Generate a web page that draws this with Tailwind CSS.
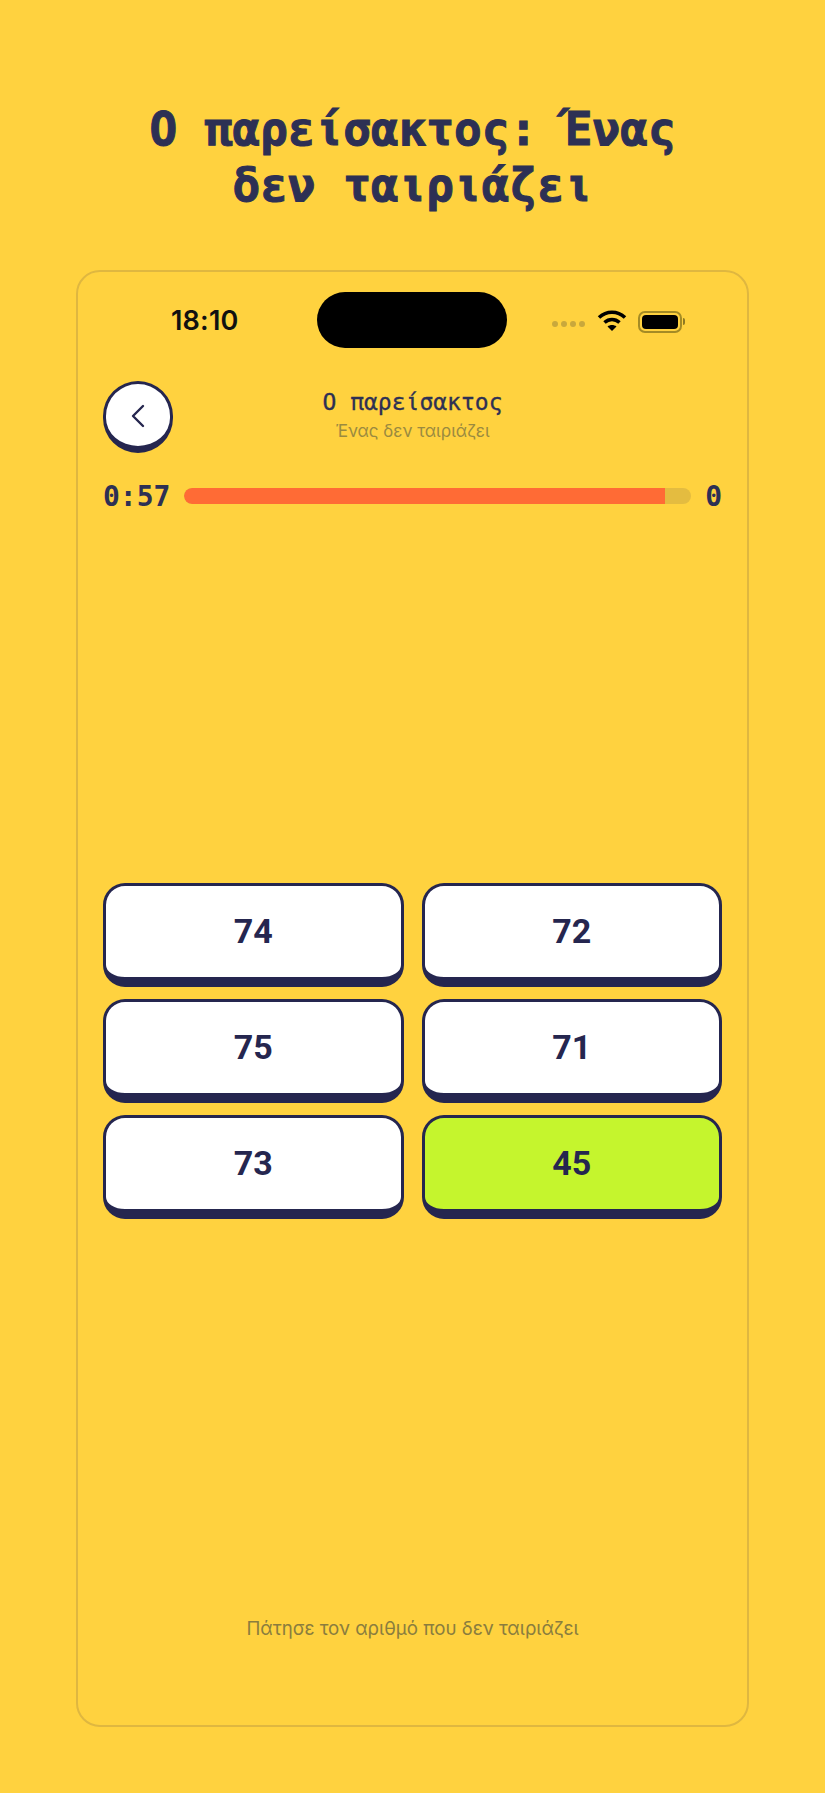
<!DOCTYPE html>
<html lang="el">
<head>
  <meta charset="UTF-8" />
  <meta name="viewport" content="width=device-width, initial-scale=1.0"/>
  <title>Ο παρείσακτος</title>
  <script src="https://cdn.jsdelivr.net/npm/@tailwindcss/browser@4"></script>
</head>
<body class="bg-[#ffd23f] font-['Inter',sans-serif]">
  <div class="w-[825px] h-[1793px] bg-[#ffd23f] pt-[101px] overflow-hidden">
    <h1 class="text-center font-['DejaVu_Sans_Mono',monospace] font-bold text-[46px] leading-[56px] text-[#2d3054] px-[130px] [-webkit-text-stroke:1px_#2d3054]">Ο παρείσακτος: Ένας δεν ταιριάζει</h1>

    <div class="mt-[57px] mx-[76px] h-[1457px] border-2 border-[#dfb740] rounded-[24px] flex flex-col">
      <!-- status bar -->
      <div class="flex items-center h-[56px] mt-[20px] pl-[93px] pr-[62px]">
        <span class="w-[146px] text-[27px] leading-8 font-semibold text-[#111] mt-[2px] tracking-[0.2px]">18:10</span>
        <div class="w-[190px] h-[56px] bg-black rounded-[28px]"></div>
        <div class="flex items-center ml-auto mt-[3px]">
          <div class="flex gap-[3px] mt-[5px] mr-[12px] -ml-[4px]">
            <span class="size-[6px] rounded-full bg-[#c9a83c]"></span>
            <span class="size-[6px] rounded-full bg-[#c9a83c]"></span>
            <span class="size-[6px] rounded-full bg-[#c9a83c]"></span>
            <span class="size-[6px] rounded-full bg-[#c9a83c]"></span>
          </div>
          <svg class="w-[30px] h-[24px] mr-[11px] -mt-[3px]" viewBox="0 0 30 24" fill="none" stroke="#000" stroke-width="3.6">
            <path d="M2 9.5C9.5 2.5 20.5 2.5 28 9.5"/>
            <path d="M7.5 14.5C12 10.5 18 10.5 22.5 14.5"/>
            <path d="M15 23l-4.500-4.500C13 16.500 17 16.500 19.500 18.500z" fill="#000" stroke="none"/>
          </svg>
          <div class="w-[44px] h-[22px] border-2 border-[#a48b25] rounded-[7px] p-[2px]">
            <div class="h-full bg-black rounded-[4px]"></div>
          </div>
          <div class="w-[2px] h-[7px] bg-[#8f7a22] rounded-r-sm ml-px"></div>
        </div>
      </div>

      <!-- header -->
      <div class="relative h-[72px] mt-[33px] mx-[25px]">
        <button class="h-[72px] w-[70px] bg-white border-[3px] border-b-[7px] border-[#25264f] rounded-full flex items-center justify-center">
          <svg class="w-[18px] h-[26px] -ml-px mt-px" viewBox="0 0 18 26" fill="none" stroke="#25264f" stroke-width="2.400" stroke-linecap="round" stroke-linejoin="round">
            <path d="M14 3L4 13l10 10"/>
          </svg>
        </button>
        <div class="absolute inset-x-0 top-[6px] text-center">
          <p class="font-['DejaVu_Sans_Mono',monospace] text-[23px] leading-[30px] text-[#2d3054] [-webkit-text-stroke:0.3px_#2d3054]">Ο παρείσακτος</p>
          <p class="text-[17px] leading-[22px] mt-[3px] text-[#9a8a3f]">Ένας δεν ταιριάζει</p>
        </div>
      </div>

      <!-- timer -->
      <div class="flex items-center mt-[26px] mx-[25px] gap-[14px]">
        <span class="font-['DejaVu_Sans_Mono',monospace] font-bold text-[28px] leading-8 mt-[2px] text-[#2d3054]">0:57</span>
        <div class="flex-1 h-[16px] rounded-full bg-[#e4bc40] overflow-hidden">
          <div class="h-full bg-[#ff6b35] rounded-l-full" style="width: 94.9%"></div>
        </div>
        <span class="font-['DejaVu_Sans_Mono',monospace] font-bold text-[28px] leading-8 mt-[2px] text-[#2d3054]">0</span>
      </div>

      <!-- answers -->
      <div class="grid grid-cols-2 gap-x-[18px] gap-y-[12px] mx-[25px] mt-[370px]">
        <button class="h-[104px] bg-white border-[3px] border-b-[10px] border-[#25264f] rounded-[22px] font-['Roboto',sans-serif] font-bold text-[34px] text-[#25264f]">74</button>
        <button class="h-[104px] bg-white border-[3px] border-b-[10px] border-[#25264f] rounded-[22px] font-['Roboto',sans-serif] font-bold text-[34px] text-[#25264f]">72</button>
        <button class="h-[104px] bg-white border-[3px] border-b-[10px] border-[#25264f] rounded-[22px] font-['Roboto',sans-serif] font-bold text-[34px] text-[#25264f]">75</button>
        <button class="h-[104px] bg-white border-[3px] border-b-[10px] border-[#25264f] rounded-[22px] font-['Roboto',sans-serif] font-bold text-[34px] text-[#25264f]">71</button>
        <button class="h-[104px] bg-white border-[3px] border-b-[10px] border-[#25264f] rounded-[22px] font-['Roboto',sans-serif] font-bold text-[34px] text-[#25264f]">73</button>
        <button class="h-[104px] bg-[#c5f52d] border-[3px] border-b-[10px] border-[#25264f] rounded-[22px] font-['Roboto',sans-serif] font-bold text-[34px] text-[#25264f]">45</button>
      </div>

      <p class="mt-auto mb-[83px] text-center text-[18.7px] leading-[26px] text-[#8a7d3e]">Πάτησε τον αριθμό που δεν ταιριάζει</p>
    </div>
  </div>
</body>
</html>
